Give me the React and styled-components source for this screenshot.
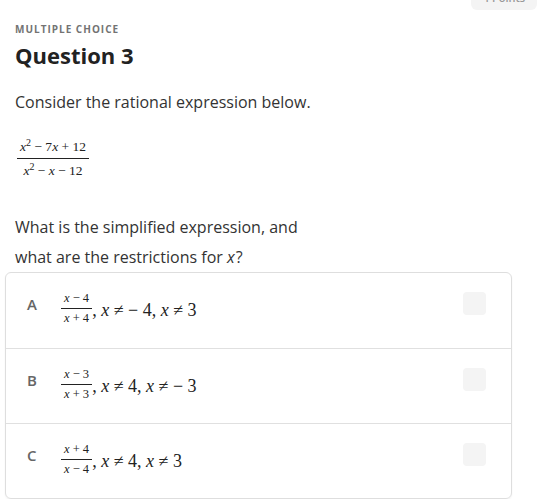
import React from "react";
import styled, { createGlobalStyle } from "styled-components";

const GlobalStyle = createGlobalStyle`
  html, body {
    margin: 0;
    padding: 0;
    background: #ffffff;
  }
  body {
    font-family: "Open Sans", "Liberation Sans", sans-serif;
    color: #333333;
  }
`;

const options = [
  { key: "A", num: "x − 4", den: "x + 4", rest: ["x ≠ − 4", "x ≠ 3"] },
  { key: "B", num: "x − 3", den: "x + 3", rest: ["x ≠ 4", "x ≠ − 3"] },
  { key: "C", num: "x + 4", den: "x − 4", rest: ["x ≠ 4", "x ≠ 3"] },
];

const Var = styled.i`
  font-family: "Liberation Serif", "Times New Roman", serif;
  font-style: italic;
`;

// render "x − 4" with italic x
const MathText = ({ text }) => {
  const parts = text.split("x");
  return (
    <>
      {parts.map((p, i) => (
        <React.Fragment key={i}>
          {i > 0 && <Var>x</Var>}
          {p}
        </React.Fragment>
      ))}
    </>
  );
};

const App = () => {
  return (
    <>
      <GlobalStyle />
      <Page>
        <TopBar>
          <PointsPill>4 Points</PointsPill>
        </TopBar>
        <Label>MULTIPLE CHOICE</Label>
        <Title>Question 3</Title>
        <Prompt>Consider the rational expression below.</Prompt>
        <BigFraction>
          <BigNum>
            <Var>x</Var>
            <sup>2</sup> − 7<Var>x</Var> + 12
          </BigNum>
          <BigDen>
            <Var>x</Var>
            <sup>2</sup> − <Var>x</Var> − 12
          </BigDen>
        </BigFraction>
        <Ask>
          What is the simplified expression, and what are the restrictions for{" "}
          <AskVar>x</AskVar>?
        </Ask>
        <Card>
          {options.map((o) => (
            <Row key={o.key}>
              <Letter>{o.key}</Letter>
              <Answer>
                <SmallFraction>
                  <SmallNum>
                    <MathText text={o.num} />
                  </SmallNum>
                  <SmallDen>
                    <MathText text={o.den} />
                  </SmallDen>
                </SmallFraction>
                <Rest>
                  , <MathText text={o.rest[0]} />, <MathText text={o.rest[1]} />
                </Rest>
              </Answer>
              <Check />
            </Row>
          ))}
        </Card>
      </Page>
    </>
  );
};

export default App;

const Page = styled.div`
  padding: 0 14px 0 15px;
`;

const TopBar = styled.div`
  display: flex;
  justify-content: flex-end;
  height: 10px;
`;

const PointsPill = styled.div`
  margin-top: -15px;
  height: 25px;
  width: 66px;
  border-radius: 6px;
  background: #f4f4f4;
  color: #999999;
  font-size: 11px;
  font-weight: 600;
  display: flex;
  align-items: center;
  justify-content: center;
  overflow: hidden;
`;

const Label = styled.div`
  margin-top: 12px;
  font-size: 10px;
  font-weight: 700;
  letter-spacing: 1px;
  color: #737373;
  line-height: 14px;
`;

const Title = styled.h1`
  margin: 4px 0 0;
  font-size: 22px;
  font-weight: 700;
  color: #222222;
  line-height: 30px;
`;

const Prompt = styled.p`
  margin: 20px 0 0;
  font-size: 16px;
  line-height: 24px;
  color: #333333;
`;

const BigFraction = styled.div`
  display: flex;
  width: max-content;
  flex-direction: column;
  align-items: center;
  margin: 25px 0 0 2px;
  font-family: "Liberation Serif", "Times New Roman", serif;
  font-size: 13.5px;
  color: #222222;
  sup {
    font-size: 10px;
    line-height: 0;
  }
`;

const BigNum = styled.div`
  padding: 0 3px 4px;
  border-bottom: 1px solid #222222;
  line-height: 15px;
`;

const BigDen = styled.div`
  padding: 4px 3px 0;
  line-height: 15px;
`;

const Ask = styled.p`
  margin: 34px 0 0;
  max-width: 300px;
  font-size: 16px;
  line-height: 30px;
  color: #333333;
`;

const AskVar = styled.em`
  padding-right: 1px;
`;

const Card = styled.div`
  margin: 0 0 0 -10px;
  width: 505px;
  border: 1px solid #dedede;
  border-radius: 6px;
  box-shadow: 0 1px 2px rgba(0, 0, 0, 0.06);
`;

const Row = styled.div`
  display: flex;
  align-items: flex-start;
  height: 75px;
  padding: 19px 25px 0 21px;
  box-sizing: border-box;
  & + & {
    border-top: 1px solid #e0e0e0;
  }
`;

const Letter = styled.div`
  width: 34px;
  padding-top: 3px;
  font-size: 15px;
  font-weight: 600;
  color: #666666;
  line-height: 18px;
`;

const Answer = styled.div`
  flex: 1;
  display: flex;
  align-items: center;
  font-family: "Liberation Serif", "Times New Roman", serif;
  color: #222222;
`;

const SmallFraction = styled.div`
  display: inline-flex;
  flex-direction: column;
  align-items: center;
  font-size: 12.5px;
`;

const SmallNum = styled.div`
  padding: 0 3px 3px;
  border-bottom: 1px solid #222222;
  line-height: 13px;
`;

const SmallDen = styled.div`
  padding: 3px 3px 0;
  line-height: 13px;
`;

const Rest = styled.span`
  font-size: 18px;
  line-height: 20px;
  margin-top: 2px;
`;

const Check = styled.div`
  width: 23px;
  height: 23px;
  border-radius: 4px;
  background: #f4f4f4;
`;
